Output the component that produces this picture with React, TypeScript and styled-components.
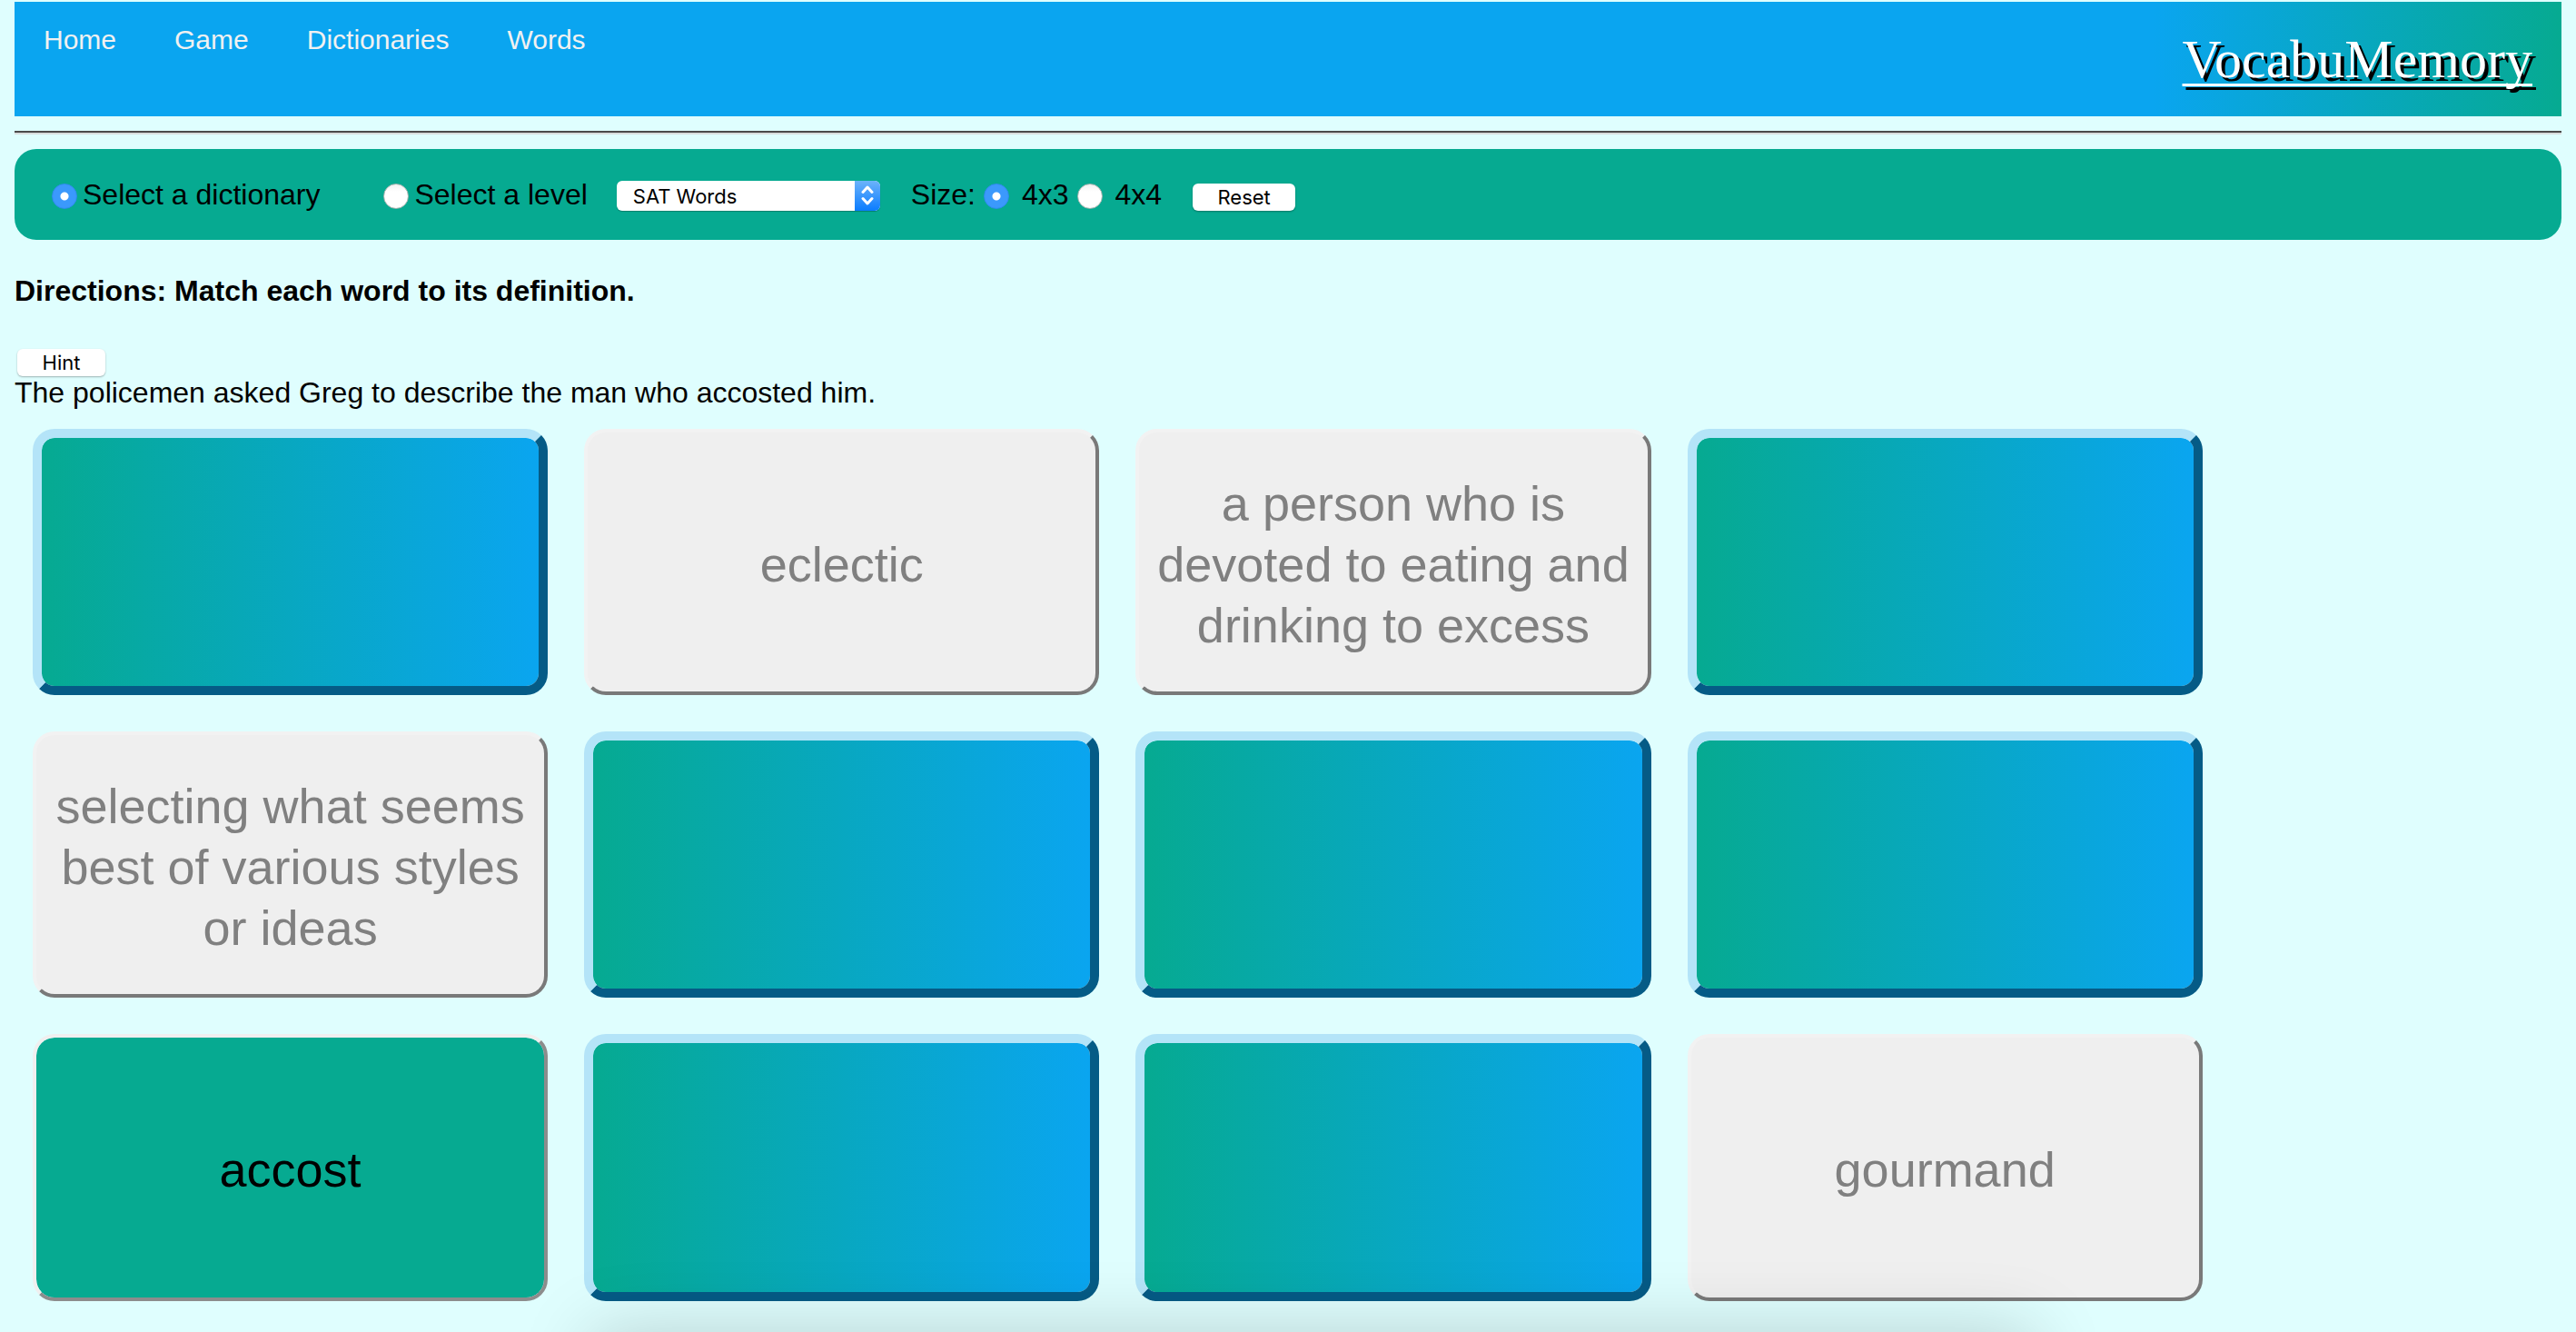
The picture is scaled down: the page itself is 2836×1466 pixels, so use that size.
import React, { useState } from "react";
import styled, { createGlobalStyle, css } from "styled-components";

const GREEN = "#06aa91";
const BLUE = "#0aa5f0";
const SANS = '"Liberation Sans", Arial, sans-serif';
const SYSTEM = 'Inter, "Liberation Sans", sans-serif';

const GlobalStyle = createGlobalStyle`
  *, *::before, *::after {
    box-sizing: border-box;
  }
  body {
    margin: 0;
    background: #dffefe;
    color: #000;
    font: 32px/36px ${SANS};
  }
`;

const Page = styled.div`
  padding: 2px 16px 0;
`;

const Header = styled.header`
  display: flex;
  justify-content: space-between;
  height: 126px;
  background: ${BLUE};
`;

const Nav = styled.nav`
  display: flex;
  gap: 64px;
  padding: 24px 32px;
`;

const NavLink = styled.a`
  color: #f1f1f1;
  font-size: 30px;
  text-decoration: none;
`;

const Brand = styled.a`
  display: flex;
  align-items: center;
  padding: 0 32px;
  background: linear-gradient(to right, ${BLUE}, ${GREEN});
  color: #fff;
  font: 60px/68px "Liberation Serif", "Times New Roman", serif;
  text-decoration: underline;
  text-decoration-thickness: 3px;
  text-decoration-skip-ink: none;
  text-underline-offset: 7px;
  text-shadow: 4px 4px #000;
`;

const Rule = styled.hr`
  margin: 16px 0;
  border: 2px solid;
  border-width: 2px 0;
  border-color: #4a4a4a #d8dcdc #d8dcdc #4a4a4a;
`;

const Toolbar = styled.form`
  display: flex;
  align-items: center;
  gap: 32px;
  height: 100px;
  padding: 0 41px;
  border-radius: 24px;
  background: ${GREEN};
`;

const ModeGroup = styled.div`
  display: flex;
  gap: 70px;
`;

const SizeGroup = styled.div`
  display: flex;
  align-items: center;
  gap: 9px;
  padding: 0 2px;
`;

const Choice = styled.label<{ $gap: number }>`
  display: flex;
  align-items: center;
  gap: ${(p) => p.$gap}px;
`;

const Radio = styled.input.attrs({ type: "radio" })`
  appearance: none;
  flex: none;
  width: 28px;
  height: 28px;
  margin: 4px 0 0;
  border: 1px solid #a8b4b0;
  border-radius: 50%;
  background: linear-gradient(#f2f2f2, #fff 30%);

  &:checked {
    border-color: #2f8bf0;
    background: radial-gradient(circle, #fff 4px, #3b99fc 5px);
  }
`;

const SelectBox = styled.div`
  display: grid;
  grid-template-columns: 262px 28px;
  height: 33px;
  margin-top: 2px;
  border-radius: 6px;
  overflow: hidden;
  box-shadow: 0 1px 1px rgba(0, 0, 0, 0.25);
`;

const Select = styled.select`
  grid-area: 1 / 1 / 2 / 3;
  appearance: none;
  border: 0;
  padding: 1px 18px 0;
  background: #fff;
  color: #000;
  font: 22px/32px ${SYSTEM};
`;

const Stepper = styled.span`
  grid-area: 1 / 2;
  display: grid;
  place-items: center;
  background: linear-gradient(#6cb3fa, #0a7cff);
  pointer-events: none;
`;

const PushButton = styled.button<{ $width: number }>`
  width: ${(p) => p.$width}px;
  height: 30px;
  padding: 0;
  border: 0;
  border-radius: 6px;
  background: #fff;
  box-shadow: 0 1px 2px rgba(0, 0, 0, 0.3);
  color: #000;
  font: 22px/30px ${SYSTEM};
`;

const ResetSlot = styled.div`
  display: flex;
  padding-top: 5px;
`;

const Directions = styled.h1`
  margin: 38px 0 46px;
  font-size: 32px;
  line-height: 36px;
`;

const Hint = styled.section`
  display: flex;
  flex-direction: column;
  align-items: flex-start;
  padding-bottom: 2px;

  button {
    margin-left: 3px;
  }
`;

const HintText = styled.p`
  margin: 0;
`;

const Board = styled.main`
  display: flex;
  flex-wrap: wrap;
`;

type Look = "hidden" | "matched" | "open";

const looks = {
  hidden: css`
    border: 10px solid;
    border-color: #b4e4f8 #055b86 #055b86 #b4e4f8;
    background: linear-gradient(to right, ${GREEN}, ${BLUE}) padding-box;
  `,
  matched: css`
    border: 4px solid;
    border-color: #f2f2f2 #797979 #797979 #f2f2f2;
    background: #efefef;
    color: #808080;
  `,
  open: css`
    border: 4px solid;
    border-color: #efefef #8c8c8c #8c8c8c #efefef;
    background: ${GREEN} padding-box;
    color: #000;
  `,
};

const Card = styled.button<{ $look: Look }>`
  width: 20vw;
  height: 20vh;
  margin: 20px;
  padding: 6px 12px 0;
  border-radius: 24px;
  font: 54px/67px ${SANS};
  text-align: center;
  ${(p) => looks[p.$look]}
`;

const DockShadow = styled.div`
  position: fixed;
  top: 100%;
  left: 23%;
  right: 21%;
  height: 100px;
  box-shadow: 0 0 80px rgba(0, 0, 0, 0.18);
  pointer-events: none;
`;

const cards: { look: Look; text: string }[] = [
  { look: "hidden", text: "" },
  { look: "matched", text: "eclectic" },
  { look: "matched", text: "a person who is devoted to eating and drinking to excess" },
  { look: "hidden", text: "" },
  { look: "matched", text: "selecting what seems best of various styles or ideas" },
  { look: "hidden", text: "" },
  { look: "hidden", text: "" },
  { look: "hidden", text: "" },
  { look: "open", text: "accost" },
  { look: "hidden", text: "" },
  { look: "hidden", text: "" },
  { look: "matched", text: "gourmand" },
];

export default function App() {
  const [mode, setMode] = useState("dictionary");
  const [size, setSize] = useState("4x3");

  return (
    <Page>
      <GlobalStyle />
      <Header>
        <Nav>
          {["Home", "Game", "Dictionaries", "Words"].map((item) => (
            <NavLink key={item} href="#">
              {item}
            </NavLink>
          ))}
        </Nav>
        <Brand href="#">VocabuMemory</Brand>
      </Header>
      <Rule />
      <Toolbar onSubmit={(e) => e.preventDefault()}>
        <ModeGroup>
          {["dictionary", "level"].map((value) => (
            <Choice key={value} $gap={6}>
              <Radio name="mode" checked={mode === value} onChange={() => setMode(value)} />
              Select a {value}
            </Choice>
          ))}
        </ModeGroup>
        <SelectBox>
          <Select aria-label="Dictionary">
            <option>SAT Words</option>
          </Select>
          <Stepper>
            <svg width="14" height="22" viewBox="0 0 14 22" fill="none" stroke="#fff" strokeWidth="3" strokeLinecap="round" strokeLinejoin="round">
              <path d="M2 7.5 7 2l5 5.5M2 14.5 7 20l5-5.5" />
            </svg>
          </Stepper>
        </SelectBox>
        <SizeGroup>
          <span>Size:</span>
          {["4x3", "4x4"].map((value) => (
            <Choice key={value} $gap={14}>
              <Radio name="size" checked={size === value} onChange={() => setSize(value)} />
              {value}
            </Choice>
          ))}
        </SizeGroup>
        <ResetSlot>
          <PushButton type="reset" $width={113}>
            Reset
          </PushButton>
        </ResetSlot>
      </Toolbar>
      <Directions>Directions: Match each word to its definition.</Directions>
      <Hint>
        <PushButton type="button" $width={97}>
          Hint
        </PushButton>
        <HintText>The policemen asked Greg to describe the man who accosted him.</HintText>
      </Hint>
      <Board>
        {cards.map((card, i) => (
          <Card key={i} type="button" $look={card.look} disabled={card.look === "matched"} aria-label={card.text || "Hidden card"}>
            {card.text}
          </Card>
        ))}
      </Board>
      <DockShadow />
    </Page>
  );
}
